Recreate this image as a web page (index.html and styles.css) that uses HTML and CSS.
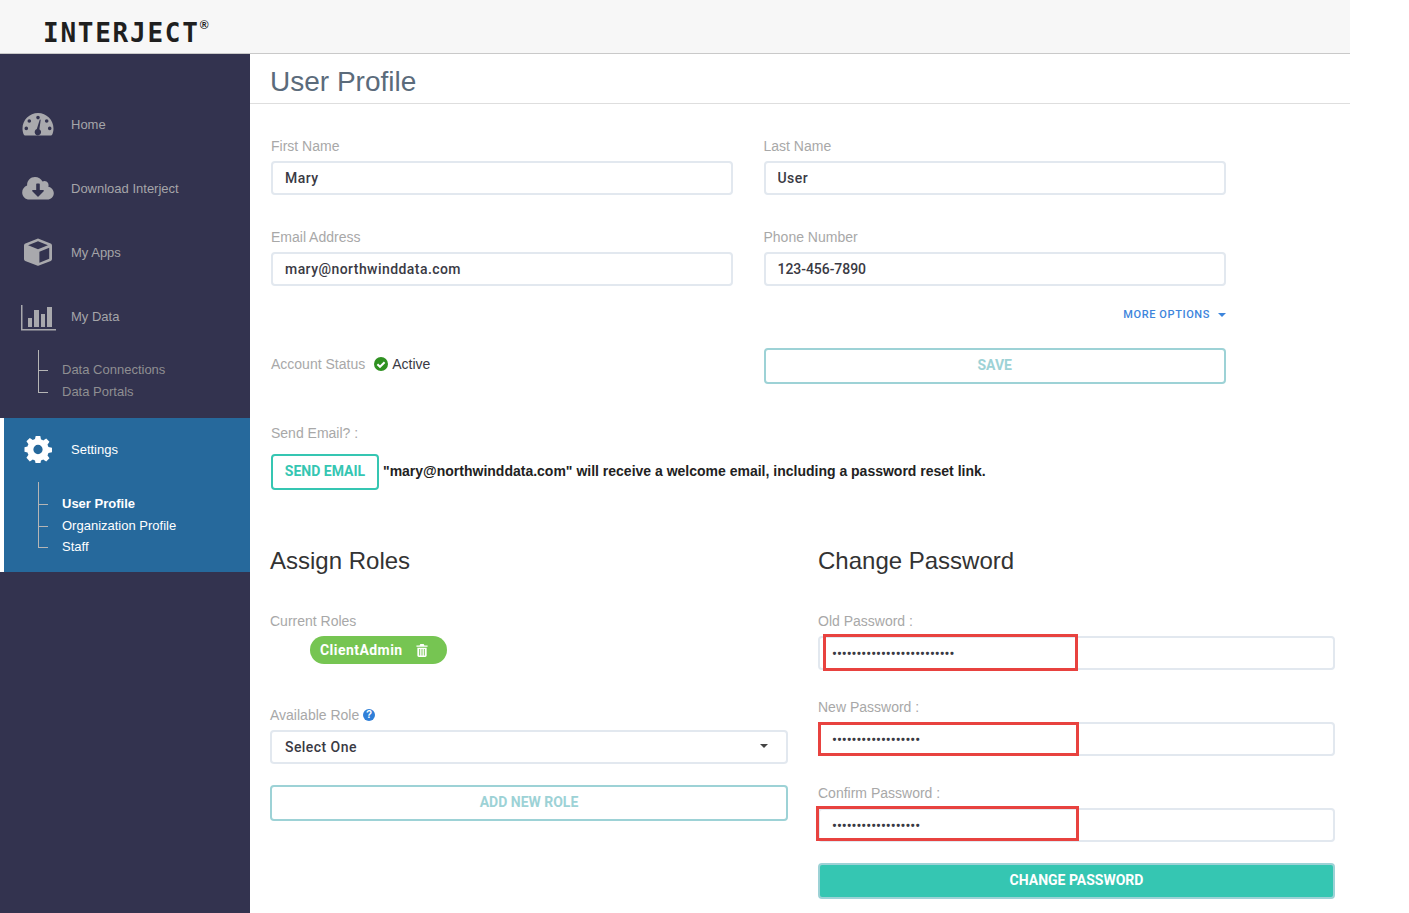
FILE: index.html
```html
<!DOCTYPE html>
<html lang="en">

<head>
  <meta charset="UTF-8">
  <meta name="viewport" content="width=device-width, initial-scale=1.0">
  <title>User Profile</title>
  <link rel="stylesheet" href="styles.css">
</head>

<body>
  <div class="page">
    <header class="topbar">
      <div class="logo">INTERJECT<sup>&reg;</sup></div>
    </header>

    <div class="shell">
      <nav class="sidebar">
        <a class="nav-item" href="#">
          <svg class="nav-icon" viewBox="0 0 32 24"><path fill-rule="evenodd" d="M16 1C7.5 1 .5 7.900.5 16.500c0 2.300.5 4.500 1.400 6.300.2.400.6.700 1.100.700h26c.5 0 .9-.3 1.100-.7.900-1.800 1.400-4 1.400-6.300C31.500 7.900 24.500 1 16 1zM16 3.800a1.800 1.800 0 1 1 0 3.600 1.800 1.800 0 0 1 0-3.600zM7.300 7.200a1.800 1.800 0 1 1 0 3.600 1.800 1.800 0 0 1 0-3.600zM24.700 7.200a1.800 1.800 0 1 1 0 3.600 1.800 1.800 0 0 1 0-3.600zM4.300 14.600a1.800 1.800 0 1 1 0 3.600 1.800 1.800 0 0 1 0-3.600zM27.700 14.600a1.800 1.800 0 1 1 0 3.600 1.800 1.800 0 0 1 0-3.600zM17.800 7.500l.9.200-1.300 9.600a3.200 3.200 0 1 1-2.600-.2z"/></svg>
          <span>Home</span>
        </a>
        <a class="nav-item" href="#">
          <svg class="nav-icon" viewBox="0 0 32 24"><path fill-rule="evenodd" d="M26.300 10.700c.2-.6.300-1.100.3-1.700a4 4 0 0 0-6.100-3.400C19.100 2.800 16.300 1 13 1 8.600 1 5.100 4.500 5.100 8.800v.8C2.200 10.700.2 13.300.2 16.400c0 3.900 3.200 7.100 7.100 7.100h18.100c3.500 0 6.400-2.800 6.400-6.300 0-3.100-2.300-5.800-5.500-6.500zM21.700 15.300l-5.200 5.200a.7.700 0 0 1-1 0l-5.200-5.200c-.4-.4-.1-1.200.5-1.200h3.400V8.300c0-.4.300-.7.700-.7h2.200c.4 0 .7.300.7.700v5.800h3.400c.6 0 .9.800.5 1.200z"/></svg>
          <span>Download Interject</span>
        </a>
        <a class="nav-item" href="#">
          <svg class="nav-icon" viewBox="0 0 32 30"><path fill-rule="evenodd" d="M16 .5L2.500 5.900c-.9.400-1.500 1.200-1.500 2.200v14.400c0 .9.500 1.700 1.300 2.100L15 29.500c.6.300 1.400.3 2 0l12.700-4.900c.8-.4 1.300-1.200 1.300-2.100V8.100c0-1-.6-1.800-1.500-2.200zM16 3.600l10.600 4.200L16 12 5.400 7.800zM17.500 14.600l10.500-4.200v11.900l-10.500 4.200z"/></svg>
          <span>My Apps</span>
        </a>
        <a class="nav-item" href="#">
          <svg class="nav-icon nav-icon-wide" viewBox="0 0 36 29"><path d="M0 3h1.500v24H35v1.500H0z"/><path d="M7 16h4v9H7zM13 8h5v17h-5zM20 12h4v13h-4zM26 5h5v20h-5z"/></svg>
          <span>My Data</span>
        </a>
        <ul class="tree tree-muted">
          <li><a href="#">Data Connections</a></li>
          <li><a href="#">Data Portals</a></li>
        </ul>

        <div class="nav-active">
          <a class="nav-item nav-item-settings" href="#">
            <svg class="nav-icon" viewBox="0 0 28 28"><path fill-rule="evenodd" d="M11.600 0h4.800l.7 3.700c.8.200 1.600.5 2.300 1l3.100-2.100 3.400 3.400-2.100 3.100c.4.700.8 1.500 1 2.300l3.700.7v4.800l-3.700.7c-.2.800-.5 1.600-1 2.300l2.100 3.100-3.400 3.400-3.100-2.100c-.7.400-1.500.8-2.300 1l-.7 3.700h-4.800l-.7-3.700c-.8-.2-1.600-.5-2.300-1l-3.100 2.100L2 22.500l2.100-3.100c-.4-.7-.8-1.500-1-2.300L0 16.400v-4.800l3.100-.7c.2-.8.5-1.600 1-2.300L2 5.500 5.500 2l3.100 2.100c.7-.4 1.500-.8 2.300-1zM14 9.200a4.800 4.800 0 1 0 0 9.600 4.800 4.800 0 0 0 0-9.600z"/></svg>
            <span>Settings</span>
          </a>
          <ul class="tree">
            <li><a class="current" href="#">User Profile</a></li>
            <li><a href="#">Organization Profile</a></li>
            <li><a href="#">Staff</a></li>
          </ul>
        </div>
      </nav>

      <main class="content">
        <h1 class="page-title">User Profile</h1>

        <section class="profile-form">
          <div class="field">
            <label>First Name</label>
            <input class="text-input" type="text" value="Mary">
          </div>
          <div class="field">
            <label>Last Name</label>
            <input class="text-input" type="text" value="User">
          </div>
          <div class="field">
            <label>Email Address</label>
            <input class="text-input" type="text" value="mary@northwinddata.com">
          </div>
          <div class="field">
            <label>Phone Number</label>
            <input class="text-input phone-input" type="text" value="123-456-7890">
          </div>
          <div class="more-options">
            <a href="#">MORE OPTIONS</a>
            <span class="caret caret-blue"></span>
          </div>
          <div class="status">
            <span class="status-label">Account Status</span>
            <svg class="status-icon" viewBox="0 0 14 14"><circle cx="7" cy="7" r="7" fill="#2f9121"/><path d="M3.400 7.200l2.600 2.600 4.600-4.600" fill="none" stroke="#fff" stroke-width="2"/></svg>
            <span class="status-value">Active</span>
          </div>
          <button class="btn btn-outline">SAVE</button>
        </section>

        <section class="send-email">
          <div class="plain-label">Send Email? :</div>
          <div class="send-row">
            <button class="btn-send">SEND EMAIL</button>
            <span class="send-note">"mary@northwinddata.com" will receive a welcome email, including a password reset link.</span>
          </div>
        </section>

        <section class="lower">
          <div class="roles">
            <h2>Assign Roles</h2>
            <div class="plain-label">Current Roles</div>
            <div class="pill">
              <span>ClientAdmin</span>
              <svg class="pill-icon" viewBox="0 0 12 14"><path fill-rule="evenodd" d="M4.200 0h3.600l.8 1.500H12v1.500H0V1.500h3.400zM1 4h10v8.500c0 .8-.7 1.500-1.500 1.500h-7C1.700 14 1 13.300 1 12.500zM3 5.500v7h1v-7zM5.500 5.500v7h1v-7zM8 5.500v7h1v-7z"/></svg>
            </div>
            <div class="plain-label role-label">
              Available Role
              <svg class="help-icon" viewBox="0 0 14 14"><circle cx="7" cy="7" r="6" fill="#2f7fd8"/><text x="7" y="10.300" text-anchor="middle" class="help-mark">?</text></svg>
            </div>
            <div class="select-box">
              <select class="text-input select-input"><option>Select One</option></select>
              <span class="caret"></span>
            </div>
            <button class="btn btn-outline btn-add">ADD NEW ROLE</button>
          </div>

          <div class="passwords">
            <h2>Change Password</h2>
            <div class="pw-field">
              <div class="plain-label">Old Password :</div>
              <input class="text-input pw-input" type="password" value="aaaaaaaaaaaaaaaaaaaaaaaaa">
              <div class="redact redact-old"></div>
            </div>
            <div class="pw-field">
              <div class="plain-label">New Password :</div>
              <input class="text-input pw-input" type="password" value="aaaaaaaaaaaaaaaaaa">
              <div class="redact redact-new"></div>
            </div>
            <div class="pw-field">
              <div class="plain-label">Confirm Password :</div>
              <input class="text-input pw-input" type="password" value="aaaaaaaaaaaaaaaaaa">
              <div class="redact redact-confirm"></div>
            </div>
            <button class="btn-solid">CHANGE PASSWORD</button>
          </div>
        </section>
      </main>
    </div>
  </div>
</body>

</html>
```

FILE: styles.css
```css
* {
  box-sizing: border-box;
}

html,
body {
  margin: 0;
  padding: 0;
  background: #fff;
  height: 913px;
  overflow: hidden;
}

body {
  font-family: "Liberation Sans", Arial, sans-serif;
  font-size: 14px;
}

a {
  text-decoration: none;
  color: inherit;
}

.page {
  width: 1350px;
}

.topbar {
  height: 54px;
  background-color: #f7f7f7;
  border-bottom: 1px solid #c9c9c9;
  padding: 17px 0 0 43px;
}

.logo {
  font-family: "DejaVu Sans Mono", monospace;
  font-weight: bold;
  font-size: 26px;
  line-height: 32px;
  letter-spacing: 1.750px;
  color: #1f1f1f;
}

.logo sup {
  font-family: "Liberation Sans", Arial, sans-serif;
  font-size: 12px;
  line-height: 0;
  letter-spacing: 0;
  vertical-align: 13px;
}

.shell {
  display: flex;
  height: 859px;
}

/* sidebar */
.sidebar {
  width: 250px;
  flex: none;
  background-color: #33334f;
  padding-top: 38px;
  color: #a5a5a9;
  font-size: 13px;
}

.nav-item {
  display: flex;
  align-items: center;
  height: 64px;
  padding-left: 22px;
}

.nav-item span {
  margin-left: 17px;
}

.nav-icon {
  width: 32px;
  height: 28px;
  fill: #a9a9ad;
  flex: none;
}

.nav-icon-wide {
  width: 36px;
  height: 29px;
  margin: 0 -4px 0 -1px;
}

.nav-icon-wide + span {
  margin-left: 18px;
}

.tree {
  position: relative;
  list-style: none;
  margin: 2px 0 0 38px;
  padding: 9px 0 0 24px;
  color: #8f8f92;
}

.tree::before {
  content: "";
  position: absolute;
  left: 0;
  top: 0;
  bottom: 11px;
  border-left: 1px solid #b5b5b5;
}

.tree li {
  position: relative;
  height: 22px;
  line-height: 22px;
}

.tree li::before {
  content: "";
  position: absolute;
  left: -24px;
  top: 11px;
  width: 10px;
  border-top: 1px solid #b5b5b5;
}

.nav-active {
  margin-top: 15px;
  height: 154px;
  background-color: #26699c;
  border-left: 4px solid #fff;
  color: #fff;
}

.nav-item-settings {
  height: 62px;
  padding-left: 18px;
}

.nav-active .nav-icon {
  width: 32px;
  height: 27px;
  fill: #fff;
}

.nav-active .tree {
  margin: 2px 0 0 34px;
  padding-top: 11px;
  color: #fff;
}

.nav-active .tree li {
  height: 21.500px;
  line-height: 21.500px;
}

.tree .current {
  font-weight: bold;
}

/* main column */
.content {
  flex: 1;
  min-width: 0;
}

.page-title {
  margin: 0;
  height: 50px;
  padding: 12px 0 0 20px;
  border-bottom: 1px solid #dedede;
  font-size: 28px;
  line-height: 32px;
  font-weight: normal;
  color: #5b6b7b;
}

.profile-form {
  display: grid;
  grid-template-columns: 462px 462.500px;
  column-gap: 30.500px;
  padding: 34px 0 0 21px;
}

.field {
  margin-bottom: 34px;
}

.field label,
.plain-label {
  display: block;
  color: #a8a8a8;
  line-height: 16px;
}

.field label {
  margin-bottom: 7px;
}

.text-input {
  display: block;
  width: 100%;
  height: 34px;
  padding: 0 12px;
  border: 2px solid #e2e8ef;
  border-radius: 4px;
  background: #fff;
  font-family: Roboto, sans-serif;
  font-size: 14px;
  font-weight: 500;
  letter-spacing: .44px;
  color: #3a3a44;
  outline: none;
}

.phone-input {
  letter-spacing: -.05px;
}

.more-options {
  grid-column: 2;
  margin: -19px 0 0;
  height: 39px;
  display: flex;
  justify-content: flex-end;
  align-items: center;
  padding-bottom: 12px;
  font-family: Roboto, sans-serif;
  font-size: 11px;
  font-weight: 500;
  letter-spacing: .6px;
  color: #3d85dc;
}

.caret {
  display: inline-block;
  width: 0;
  height: 0;
  border-left: 4px solid transparent;
  border-right: 4px solid transparent;
  border-top: 4px solid #444;
}

.caret-blue {
  margin: 0 0 0 8px;
  border-top-color: #3d85dc;
}

.status {
  grid-column: 1;
  display: flex;
  align-items: center;
  height: 36px;
  margin-top: 8px;
  padding-bottom: 4px;
}

.status-label {
  color: #a8a8a8;
}

.status-icon {
  width: 14px;
  height: 14px;
  margin: 0 4px 0 9px;
}

.status-value {
  color: #3a3a44;
}

.btn {
  display: block;
  width: 100%;
  height: 36px;
  padding: 0 0 2px;
  background: #fff;
  border: 2px solid #9dd2d6;
  border-radius: 4px;
  font-family: Roboto, sans-serif;
  font-size: 14px;
  font-weight: 700;
  color: #9dd2d6;
}

.profile-form .btn {
  grid-column: 2;
  grid-row: 4;
  margin-top: 8px;
}

.send-email {
  padding: 41px 0 0 21px;
}

.send-row {
  display: flex;
  align-items: center;
  margin-top: 13px;
}

.btn-send {
  width: 108px;
  height: 36px;
  background: #fff;
  border: 2px solid #35c6b2;
  border-radius: 4px;
  font-family: Roboto, sans-serif;
  font-size: 14px;
  font-weight: 700;
  color: #35c6b2;
  padding: 0 0 2px;
}

.send-note {
  margin: 0 0 3px 4px;
  font-weight: bold;
  color: #222;
}

.lower {
  display: grid;
  grid-template-columns: 518px 517px;
  column-gap: 30px;
  padding: 56px 0 0 20px;
}

.lower h2 {
  margin: 0 0 37px;
  font-size: 24px;
  line-height: 30px;
  font-weight: normal;
  color: #333;
}

.pill {
  display: inline-flex;
  align-items: center;
  height: 28px;
  margin: 7px 0 0 40px;
  padding: 0 19px 0 10px;
  border-radius: 14px;
  background-color: #76c552;
  color: #fff;
  font-family: Roboto, sans-serif;
  font-weight: 700;
  letter-spacing: .45px;
}

.pill-icon {
  width: 12px;
  height: 13px;
  margin-left: 13px;
  fill: #fff;
}

.role-label {
  margin-top: 43px;
}

.help-icon {
  width: 14px;
  height: 14px;
  margin-left: -1px;
  vertical-align: -2px;
}

.help-mark {
  font-family: "Liberation Sans", Arial, sans-serif;
  font-size: 10px;
  font-weight: bold;
  fill: #fff;
}

.select-box {
  position: relative;
  margin-top: 7px;
}

.select-input {
  appearance: none;
  padding-left: 13px;
}

.select-box .caret {
  position: absolute;
  right: 20px;
  top: 14px;
}

.btn-add {
  margin-top: 21px;
}

.pw-field {
  position: relative;
  height: 86px;
}

.pw-input {
  margin-top: 7px;
  padding-top: 2px;
  letter-spacing: 0;
  color: #3a3a44;
}

/* red boxes drawn over the password fields */
.redact {
  position: absolute;
  border: 3px solid #e8423f;
}

.redact-old {
  left: 5px;
  right: 257px;
  top: 21px;
  height: 37px;
}

.redact-new {
  left: 0;
  right: 256px;
  top: 23px;
  height: 34px;
}

.redact-confirm {
  left: -2px;
  right: 256px;
  top: 21px;
  height: 35px;
}

.btn-solid {
  display: block;
  width: 100%;
  height: 36px;
  margin-top: -8px;
  padding: 0 0 2px;
  background-color: #35c6b2;
  border: 2px solid #9dd2d6;
  border-radius: 4px;
  font-family: Roboto, sans-serif;
  font-size: 14px;
  font-weight: 700;
  color: #fff;
}
```
